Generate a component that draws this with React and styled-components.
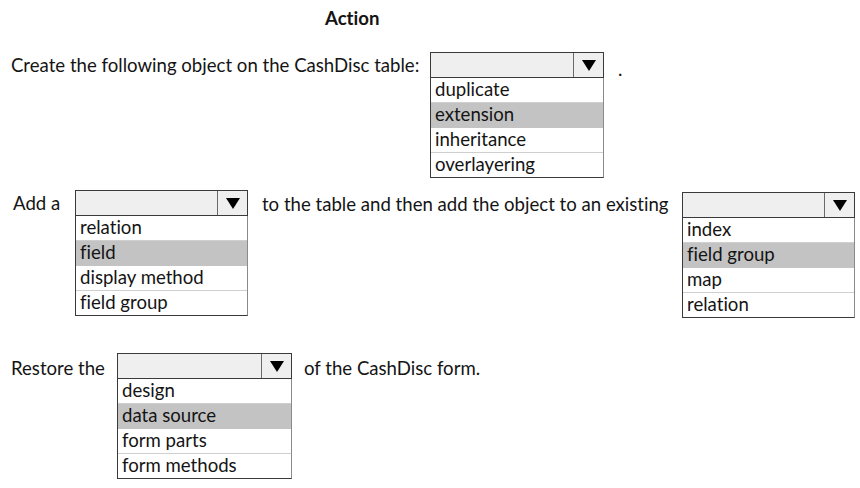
import React from "react";
import styled, { createGlobalStyle } from "styled-components";

const Global = createGlobalStyle`
  html, body { margin: 0; padding: 0; background: #ffffff; }
  body {
    font-family: Lato, "Open Sans", sans-serif;
    color: #141414;
    font-variant-ligatures: none;
    font-feature-settings: "liga" 0;
  }
`;

const Page = styled.div`
  width: 860px;
  height: 488px;
  box-sizing: border-box;
  padding-top: 6px;
  background: #fff;
`;

const Title = styled.div`
  font-weight: 700;
  font-size: 18.6px;
  line-height: 24px;
  padding-left: 325px;
  margin-bottom: 22px;
`;

const Row = styled.div`
  display: flex;
  align-items: flex-start;
  margin-top: ${(p) => p.$mt || 0}px;
`;

const Label = styled.div`
  box-sizing: border-box;
  flex: none;
  width: ${(p) => p.$w}px;
  padding-left: ${(p) => p.$pl || 0}px;
  margin-top: ${(p) => p.$dy || 0}px;
  height: 26px;
  line-height: 26px;
  font-size: 18.6px;
  white-space: nowrap;
`;

const Dot = styled.div`
  font-size: 18.6px;
  line-height: 26px;
  margin-top: 4px;
  padding-left: 14px;
`;

const Drop = styled.div`
  flex: none;
  width: ${(p) => p.$w}px;
  margin-top: ${(p) => p.$dy || 0}px;
  box-sizing: border-box;
`;

const Select = styled.div`
  display: flex;
  height: 26px;
  box-sizing: border-box;
  border: 1px solid #3a3a3a;
  background: #efefef;
`;

const SelectField = styled.div`
  flex: 1;
`;

const ArrowCell = styled.div`
  width: 29px;
  border-left: 1px solid #6a6a6a;
  display: flex;
  align-items: center;
  justify-content: center;
`;

const List = styled.div`
  border-left: 1px solid #3a3a3a;
  border-right: 1px solid #8a8a8a;
  border-bottom: 1px solid #3a3a3a;
`;

const Item = styled.div`
  height: 25px;
  box-sizing: border-box;
  line-height: 22px;
  font-size: 18.6px;
  padding-left: 4px;
  background: ${(p) => (p.$sel ? "#c3c3c3" : "#fff")};
  border-bottom: 1px solid ${(p) => (p.$sel ? "#c3c3c3" : "#cfcfcf")};
  &:last-child { border-bottom: none; height: 24px; }
  white-space: nowrap;
`;

const Arrow = () => (
  <svg width="14" height="11" viewBox="0 0 14 11">
    <polygon points="0,0 14,0 7,11" fill="#000" />
  </svg>
);

function Dropdown({ w, dy, items, sel }) {
  return (
    <Drop $w={w} $dy={dy}>
      <Select>
        <SelectField />
        <ArrowCell>
          <Arrow />
        </ArrowCell>
      </Select>
      <List>
        {items.map((t, i) => (
          <Item key={t} $sel={i === sel}>
            {t}
          </Item>
        ))}
      </List>
    </Drop>
  );
}

export default function App() {
  return (
    <Page>
      <Global />
      <Title>Action</Title>
      <Row>
        <Label $w={430} $pl={11}>
          Create the following object on the CashDisc table:
        </Label>
        <Dropdown
          w={174}
          items={["duplicate", "extension", "inheritance", "overlayering"]}
          sel={1}
        />
        <Dot>.</Dot>
      </Row>
      <Row $mt={12}>
        <Label $w={75} $pl={13}>
          Add a
        </Label>
        <Dropdown
          w={173}
          items={["relation", "field", "display method", "field group"]}
          sel={1}
        />
        <Label $w={434} $pl={14} $dy={1}>
          to the table and then add the object to an existing
        </Label>
        <Dropdown
          w={173}
          dy={2}
          items={["index", "field group", "map", "relation"]}
          sel={1}
        />
      </Row>
      <Row $mt={35}>
        <Label $w={117} $pl={11} $dy={2}>
          Restore the
        </Label>
        <Dropdown
          w={175}
          items={["design", "data source", "form parts", "form methods"]}
          sel={1}
        />
        <Label $w={200} $pl={12} $dy={2}>
          of the CashDisc form.
        </Label>
      </Row>
    </Page>
  );
}
